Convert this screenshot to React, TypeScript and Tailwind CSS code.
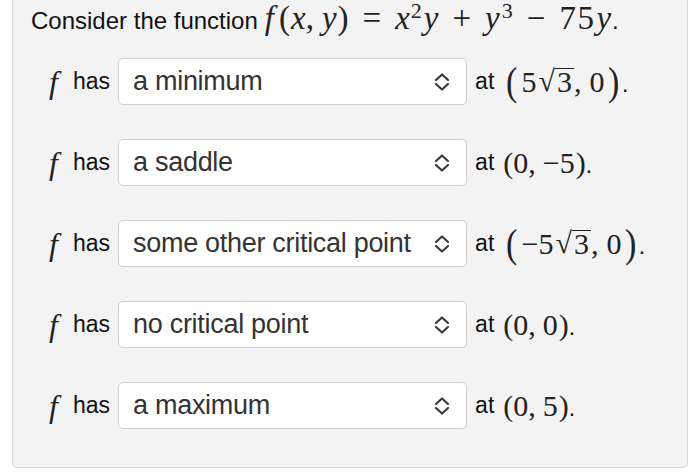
import React from "react";

function Chevrons() {
  return (
    <svg className="shrink-0" width="16" height="20" viewBox="0 0 16 20" fill="none" stroke="#3a3a3a" strokeWidth="2.2" strokeLinecap="round" strokeLinejoin="round">
      <path d="M2 8 L8 2.5 L14 8" />
      <path d="M2 12 L8 17.5 L14 12" />
    </svg>
  );
}

function Sqrt3() {
  return (
    <span className="inline-flex items-baseline ml-[2px]">
      <span className="relative top-[-1px]">√</span>
      <span className="border-t-[1.5px] border-[#222] leading-[26px] px-[2px]">3</span>
    </span>
  );
}

const math = "font-['Liberation_Serif',serif] text-[30px] text-[#222]";

function BigParen({ c }: { c: string }) {
  return <span className="inline-block text-[40px] font-light leading-none scale-x-[0.85] mx-[2px]">{c}</span>;
}

const rows: { value: string; at: React.ReactNode }[] = [
  {
    value: "a minimum",
    at: (
      <>
        <BigParen c="(" />
        <span className="ml-[1px]">5</span>
        <Sqrt3 />,<span className="ml-[8px]">0</span>
        <BigParen c=")" />
      </>
    ),
  },
  {
    value: "a saddle",
    at: (
      <>
        (0,<span className="ml-[7px] mr-[1px]">−5</span>)
      </>
    ),
  },
  {
    value: "some other critical point",
    at: (
      <>
        <BigParen c="(" />
        <span className="ml-[1px]">−5</span>
        <Sqrt3 />,<span className="ml-[8px]">0</span>
        <BigParen c=")" />
      </>
    ),
  },
  {
    value: "no critical point",
    at: (
      <>
        (0,<span className="ml-[7px] mr-[1px]">0</span>)
      </>
    ),
  },
  {
    value: "a maximum",
    at: (
      <>
        (0,<span className="ml-[7px] mr-[1px]">5</span>)
      </>
    ),
  },
];

export default function App() {
  return (
    <div className="w-[700px] h-[472px] bg-white px-[12px] font-['Liberation_Sans',Arial,sans-serif] text-[#111]">
      <div className="h-[468px] border-x border-b border-[#d6d6d6] rounded-b-[5px] bg-[#f3f3f3] pl-[18px]">
        <div className="h-[40px] flex items-baseline">
          <span className="text-[24px] leading-[28px]">Consider the function</span>
          <span className={`${math} ml-[7px] text-[33px] leading-[28px]`}>
            <i>f</i>
            <span className="ml-[5px]">(</span>
            <i className="ml-[1px]">x</i>,<i className="ml-[8px]">y</i>
            <span className="ml-[1px]">)</span>
            <span className="mx-[14px]">=</span>
            <i>x</i>
            <span className="inline-block text-[22px] leading-[22px] align-[11px] ml-[1px]">2</span>
            <i className="ml-[2px]">y</i>
            <span className="mx-[14px]">+</span>
            <i>y</i>
            <span className="inline-block text-[22px] leading-[22px] align-[11px] ml-[2px]">3</span>
            <span className="mx-[14px]">−</span>
            <span className="tracking-[1.5px]">75</span>
            <i className="ml-[1px]">y</i>
          </span>
          <span className="text-[24px] leading-[28px] ml-[1px]">.</span>
        </div>
        <div className="mt-[18px] pl-[18px] flex flex-col gap-[34px]">
          {rows.map((r) => (
            <div key={r.value} className="h-[47px] flex items-center">
              <i className={`${math} text-[32px] w-[18px]`}>f</i>
              <span className="ml-[6px] text-[23px]">has</span>
              <div className="ml-[8px] w-[349px] h-[47px] bg-white border border-[#cfcfcf] rounded-[5px] flex items-center justify-between pl-[14px] pr-[16px]">
                <span className="text-[27px] text-[#333] tracking-[-0.3px] whitespace-nowrap">{r.value}</span>
                <Chevrons />
              </div>
              <span className="ml-[8px] text-[23px]">at</span>
              <span className={`${math} ml-[9px] flex items-center`}>{r.at}</span>
              <span className="text-[23px] self-center mt-[6px]">.</span>
            </div>
          ))}
        </div>
      </div>
    </div>
  );
}
